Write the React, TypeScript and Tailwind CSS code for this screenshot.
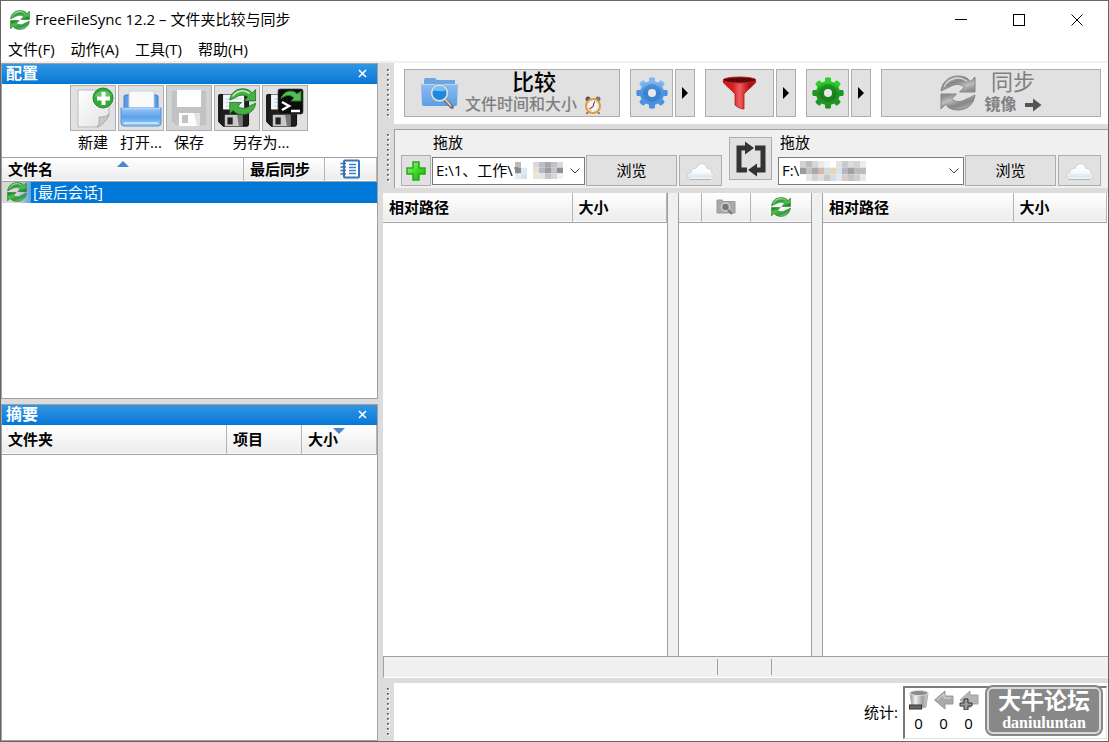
import React from "react";

const SyncIcon = ({ className, gray = false }: { className: string; gray?: boolean }) => {
  const id = gray ? "sync-gray" : "sync-green";
  const arrow =
    "M1 16 C2 7 9 1 18 1 C24 1 28 3 30.5 6.5 L35 2 V17 H19.5 L24.5 12 C20 8.500 15 9 11.500 11 C8 12.500 6 13.500 1 16 Z";
  return (
    <svg viewBox="0 0 36 36" className={className}>
      <defs>
        <linearGradient id={id} x1="0" y1="0" x2="0.7" y2="1">
          <stop offset="0" stopColor={gray ? "#c9c9c9" : "#a5dd9c"} />
          <stop offset="0.45" stopColor={gray ? "#858585" : "#2f9e35"} />
          <stop offset="0.75" stopColor={gray ? "#bdbdbd" : "#55bf50"} />
          <stop offset="1" stopColor={gray ? "#8e8e8e" : "#1f8a2c"} />
        </linearGradient>
      </defs>
      <g fill={`url(#${id})`} stroke={gray ? "#858585" : "#187522"} strokeWidth="1">
        <path d={arrow} />
        <path d={arrow} transform="rotate(180 18 18)" />
      </g>
      <path d="M4 12 C8 4 18 0 27 6" fill="none" stroke="#fff" strokeOpacity="0.6" strokeWidth="1.500" />
    </svg>
  );
};

const GearIcon = ({ className, color }: { className: string; color: "blue" | "green" }) => {
  const fill = color === "blue" ? "#4a92e0" : "#1f9423";
  const top = color === "blue" ? "#7db8f2" : "#2fce2b";
  const edge = color === "blue" ? "#2f72c4" : "#147018";
  return (
    <svg viewBox="0 0 32 32" className={className}>
      <defs>
        <linearGradient id={`gear-${color}`} x1="0" y1="0" x2="0" y2="1">
          <stop offset="0" stopColor={top} />
          <stop offset="0.5" stopColor={fill} />
          <stop offset="1" stopColor={fill} />
        </linearGradient>
      </defs>
      <g fill={`url(#gear-${color})`}>
        {[0, 45, 90, 135, 180, 225, 270, 315].map((angle) => (
          <path
            key={angle}
            d="M10.500 7 L13 4.500 V1 Q16 -0.500 19 1 V4.500 L21.500 7 Z"
            fill={angle === 0 || angle === 45 || angle === 315 ? top : fill}
            transform={`rotate(${angle} 16 16)`}
          />
        ))}
        <circle cx="16" cy="16" r="12" />
      </g>
      <circle cx="16" cy="16" r="6.500" fill="none" stroke={edge} strokeOpacity="0.5" strokeWidth="5" />
      <circle cx="16" cy="16" r="4" fill="#e8e8e8" />
    </svg>
  );
};

const CloudIcon = () => (
  <svg viewBox="0 0 30 20" className="w-[30px] h-5">
    <defs>
      <linearGradient id="cloud" x1="0" y1="0" x2="0" y2="1">
        <stop offset="0" stopColor="#ffffff" />
        <stop offset="0.55" stopColor="#f7fafc" />
        <stop offset="0.8" stopColor="#dbe8f1" />
        <stop offset="1" stopColor="#fafafa" />
      </linearGradient>
    </defs>
    <path
      d="M6 18.500 C0 18.500 0 12 5 11.500 C5 8 8 7 10 7.500 C12 1 20 1 21 7.500 C24 7 26 9 25.500 11.500 C30 13 29 18.500 24 18.500 Z"
      fill="url(#cloud)"
      stroke="#cfcfcf"
    />
    <path d="M4 18.500 H25" stroke="#b3b3b3" />
  </svg>
);

const Floppy = () => (
  <>
    <path d="M3 5 Q3 4 4 4 H35 Q37 4 37 6 V38 Q37 40 35 40 H8 L3 35 Z" fill="#1d1d1d" stroke="#000" />
    <path d="M8 4 H32 V21 H8 Z" fill="#f3f5f8" />
    <path d="M11 9 H29 M11 13 H29 M11 17 H29" stroke="#b9cfe4" />
    <path d="M10 27 H30 V40 H10 Z" fill="#c9c9c9" />
    <path d="M24 27 H30 V40 H26 Z" fill="#777" />
    <path d="M13 30 H19 V38 H13 Z" fill="#222" />
  </>
);

const NewIcon = () => (
  <svg viewBox="0 0 44 44" className="size-11">
    <defs>
      <linearGradient id="paper" x1="0" y1="0" x2="1" y2="1">
        <stop offset="0" stopColor="#fff" />
        <stop offset="1" stopColor="#e2e2e2" />
      </linearGradient>
    </defs>
    <path d="M7 4 H38 V30 C34 35 31 39 27 41 H7 Z" fill="url(#paper)" stroke="#bbb" />
    <path d="M38 28 C35 31 32 31 28 31 C29 35 28 39 26 41 C32 39 36 34 38 28 Z" fill="#c9c9c9" stroke="#9a9a9a" strokeWidth="0.700" />
    <circle cx="32" cy="12" r="10" fill="#35a83a" stroke="#1f8d2a" />
    <path d="M24 11 C25 4 38 2 40 10 C36 12 30 9 24 11 Z" fill="#77cc73" opacity="0.7" />
    <path d="M30.500 6 H34.500 V10.500 H39 V14.500 H34.500 V19 H30.500 V14.500 H26 V10.500 H30.500 Z" fill="#fff" />
  </svg>
);

const OpenIcon = () => (
  <svg viewBox="0 0 44 44" className="size-11">
    <defs>
      <linearGradient id="tray" x1="0" y1="0" x2="0" y2="1">
        <stop offset="0" stopColor="#96c7f8" />
        <stop offset="0.5" stopColor="#5ba1ec" />
        <stop offset="1" stopColor="#9ccdf7" />
      </linearGradient>
    </defs>
    <path d="M5 11 Q5 9 7 9 H37 Q39 9 39 11 V24 H5 Z" fill="#5a9ce6" stroke="#3a7dcc" />
    <path d="M10 5 H35 V22 H10 Z" fill="#fafafa" stroke="#c7d4e2" />
    <path d="M2 22 H42 V37 Q42 40 39 40 H5 Q2 40 2 37 Z" fill="url(#tray)" stroke="#5792d2" />
    <path d="M3 22.500 H41" stroke="#b4d6fa" strokeWidth="1.500" />
    <path d="M5 37 H39" stroke="#c4e2fb" strokeWidth="2" />
  </svg>
);

const SaveIcon = () => (
  <svg viewBox="0 0 44 44" className="size-11">
    <rect width="44" height="44" fill="#d2d3d3" />
    <path d="M4 4 H40 V40 H9 L4 35 Z" fill="#c2c4c4" stroke="#d8d8d8" />
    <path d="M10 4 H34 V21 H10 Z" fill="#fff" />
    <path d="M12 27 H33 V40 H12 Z" fill="#fdfdfd" />
    <path d="M27 27 H33 V40 H30 Z" fill="#e3e3e3" />
    <path d="M15 29 H21 V37 H15 Z" fill="#c2c4c4" />
  </svg>
);

const SaveAsSyncIcon = () => {
  const arrow =
    "M1 16 C2 7 9 1 18 1 C24 1 28 3 30.5 6.5 L35 2 V17 H19.5 L24.5 12 C20 8.500 15 9 11.500 11 Z";
  return (
    <svg viewBox="0 0 44 44" className="size-11">
      <g transform="translate(1 5) scale(0.88)">
        <Floppy />
      </g>
      <g transform="translate(14 2) scale(0.76)" fill="#46b045" stroke="#14691d">
        <path d={arrow} />
        <path d={arrow} transform="rotate(180 18 18)" />
        <path d="M5 11 C9 4 18 1 27 7" fill="none" stroke="#c6ecbf" strokeWidth="2" />
      </g>
    </svg>
  );
};

const SaveAsBatchIcon = () => (
  <svg viewBox="0 0 44 44" className="size-11">
    <g transform="translate(1 5) scale(0.88)">
      <Floppy />
    </g>
    <rect x="15" y="3" width="25" height="25" rx="2" fill="#0c0c0c" stroke="#444" strokeWidth="0.700" />
    <path d="M18 13 C20 4 31 3 34 8 L38 5 V15 H28 L31 12 C27 8 22 9 18 13 Z" fill="#58b957" stroke="#1e7d28" />
    <path d="M19 16 L26 20 L19 24" fill="none" stroke="#fff" strokeWidth="2.500" />
    <path d="M28 25 H37" stroke="#fff" strokeWidth="2.500" />
  </svg>
);

const FolderSearchIcon = () => (
  <svg viewBox="0 0 38 34" className="w-[38px] h-[34px]">
    <defs>
      <linearGradient id="folder" x1="0" y1="0" x2="0" y2="1">
        <stop offset="0" stopColor="#8fbcf0" />
        <stop offset="1" stopColor="#5a9de4" />
      </linearGradient>
    </defs>
    <path d="M3 8 V4 Q3 2 5 2 H14 L16 4 H34 V8 Z" fill="#6ca6e2" />
    <path d="M0 8 H37 L36 29 Q36 30 34 30 H3 Q1 30 1 28 Z" fill="url(#folder)" />
    <path d="M1 8.500 H36" stroke="#b5d5f7" />
    <path d="M24 24 L31 31" stroke="#777" strokeWidth="4" strokeLinecap="round" />
    <path d="M24 23 L30 30" stroke="#d5d5d5" strokeWidth="1.500" />
    <circle cx="18.500" cy="17" r="8" fill="#1f88dc" stroke="#d9e3ec" strokeWidth="2" />
    <circle cx="18.500" cy="17" r="9" fill="none" stroke="#8a9aa8" strokeWidth="0.600" />
    <path d="M12 15 C13 9 22 8 25 14 C20 17 16 14 12 15 Z" fill="#6fc3f7" />
  </svg>
);

const ClockIcon = () => (
  <svg viewBox="0 0 20 20" className="size-5">
    <circle cx="5" cy="4" r="2.500" fill="#555" />
    <circle cx="15" cy="4" r="2.500" fill="#777" />
    <path d="M5 17 L3.500 19 M15 17 L16.500 19" stroke="#777" strokeWidth="2" />
    <circle cx="10" cy="11" r="7" fill="#f5f8fb" stroke="#e39a3c" strokeWidth="2" />
    <circle cx="10" cy="11" r="5" fill="none" stroke="#a8b9c8" strokeWidth="1" strokeDasharray="1 2" />
    <path d="M11.500 6.500 L10 11.500" stroke="#333" />
    <path d="M10 11.500 L6.500 14" stroke="#e03030" strokeWidth="1.500" />
  </svg>
);

const FunnelIcon = () => (
  <svg viewBox="0 0 36 34" className="w-9 h-[34px]">
    <defs>
      <linearGradient id="funnel" x1="0" y1="0" x2="1" y2="0">
        <stop offset="0" stopColor="#cf1717" />
        <stop offset="0.3" stopColor="#d92020" />
        <stop offset="0.5" stopColor="#ee5e5e" />
        <stop offset="0.8" stopColor="#b50d0d" />
      </linearGradient>
    </defs>
    <path d="M1 5 C1 8 9 13 13 18 V29 C15 31 19 33 22 33 V18 C26 13 34 8 34 5 Z" fill="url(#funnel)" stroke="#b31515" strokeWidth="0.800" />
    <ellipse cx="17.500" cy="4" rx="16.500" ry="3" fill="#5d0909" stroke="#c92020" strokeWidth="1" />
  </svg>
);

const SwapIcon = () => (
  <svg viewBox="0 0 32 36" className="w-8 h-9">
    <g fill="none" stroke="#333" strokeWidth="5">
      <path d="M12 29 H4 V7 H11" />
      <path d="M20 7 H28 V29 H21" />
    </g>
    <path d="M10 0.500 L19 7 L10 13.500 Z" fill="#333" />
    <path d="M22 22.500 L13 29 L22 35.500 Z" fill="#333" />
  </svg>
);

const PlusIcon = () => (
  <svg viewBox="0 0 20 20" className="size-5">
    <defs>
      <linearGradient id="plus" x1="0" y1="0" x2="1" y2="1">
        <stop offset="0" stopColor="#b4f59a" />
        <stop offset="0.5" stopColor="#3fdc25" />
        <stop offset="1" stopColor="#13b500" />
      </linearGradient>
    </defs>
    <path d="M7 1 H13 V7 H19 V13 H13 V19 H7 V13 H1 V7 H7 Z" fill="url(#plus)" stroke="#2ba51b" strokeWidth="1.500" />
  </svg>
);

const LogIcon = () => (
  <svg viewBox="0 0 20 20" className="size-5">
    <rect x="4" y="1.500" width="15" height="17" rx="1" fill="#fff" stroke="#3474c0" strokeWidth="2" />
    <path d="M9 5.500 H16 M9 8.500 H16 M9 11.500 H16 M9 14.500 H16" stroke="#3f7fc9" strokeWidth="1.500" />
    <path d="M0.500 4.500 H6 M0.500 8 H6 M0.500 11.500 H6 M0.500 15 H6" stroke="#3f6fa5" strokeWidth="1.500" />
  </svg>
);

const CameraIcon = () => (
  <svg viewBox="0 0 20 18" className="w-5 h-[18px]">
    <path d="M1 2 H6 L7 3.500 H19 V15 H1 Z" fill="#a9a9a9" stroke="#999" />
    <circle cx="9.500" cy="9" r="4" fill="#777" stroke="#d0d0d0" strokeWidth="1.500" />
    <path d="M12 12 L16 16" stroke="#777" strokeWidth="2" />
  </svg>
);

const Gripper = ({ id }: { id: string }) => (
  <div className="w-[11px] shrink-0 bg-[#dcdcdc] flex items-center pl-1">
    <svg width="3" height="49">
      <defs>
        <pattern id={id} width="3" height="5" patternUnits="userSpaceOnUse">
          <rect width="2" height="2" fill="#8c8c8c" />
          <rect width="1" height="1" fill="#4a4a4a" />
          <path d="M2 1 H3 V3 H1 V2 H2 Z" fill="#fff" />
        </pattern>
      </defs>
      <rect width="3" height="49" fill={`url(#${id})`} />
    </svg>
  </div>
);

const Button = ({
  className,
  label,
  disabled,
  children,
}: {
  className: string;
  label?: string;
  disabled?: boolean;
  children: React.ReactNode;
}) => (
  <button
    type="button"
    aria-label={label}
    disabled={disabled}
    className={`flex items-center justify-center shrink-0 bg-[#e1e1e1] border border-[#adadad] ${className}`}
  >
    {children}
  </button>
);

const MenuArrow = ({ label }: { label: string }) => (
  <Button className="w-5 h-12" label={label}>
    <svg viewBox="0 0 6 12" className="w-[6px] h-3">
      <path d="M0 0 L6 6 L0 12 Z" fill="#000" />
    </svg>
  </Button>
);

const Caption = ({ title }: { title: string }) => (
  <div className="h-5 shrink-0 flex items-start justify-between pl-1 pr-[9px] bg-linear-to-b from-[#3096e4] to-[#0078d7] text-white">
    <h2 className="text-[16px] leading-[18px] font-bold">{title}</h2>
    <button type="button" aria-label={`关闭${title}`} className="w-3 h-[19px] flex items-center justify-center">
      <svg viewBox="0 0 9 9" className="w-[9px] h-[9px]">
        <path d="M1 1 L8 8 M8 1 L1 8" stroke="#fff" strokeWidth="1.600" />
      </svg>
    </button>
  </div>
);

const SortArrow = ({ down = false, className }: { down?: boolean; className: string }) => (
  <svg viewBox="0 0 12 6" className={`absolute w-3 h-[6px] ${className}`}>
    <path d={down ? "M0 0 H12 L6 6 Z" : "M0 6 L6 0 L12 6 Z"} fill="#4a86cc" />
  </svg>
);

const Mosaic = ({ rows, className }: { rows: string[][]; className: string }) => (
  <svg
    viewBox={`0 0 ${rows[0].length * 6} ${rows.length * 6}`}
    preserveAspectRatio="none"
    className={`absolute pointer-events-none ${className}`}
  >
    {rows.map((row, y) =>
      row.map((color, x) => <rect key={`${x}-${y}`} x={x * 6} y={y * 6} width="6" height="6" fill={color} />)
    )}
  </svg>
);

const leftMosaic = [
  ["#b9b9b9", "#ffffff", "#ffffff", "#d8d8d8", "#bdbdc2", "#a8a8a8", "#c3c3c3", "#d9d9dd"],
  ["#8c8c8c", "#dde9f3", "#ffffff", "#e6dfd6", "#b3b9c2", "#9d9d9d", "#bfc3cc", "#909090"],
  ["#ececec", "#cfe4f5", "#ffffff", "#f0e2d0", "#e3e3e3", "#c6c6c6", "#d5d5d5", "#f2f2f2"],
];

const rightMosaic = [
  ["#d2d2d2", "#bdbdbd", "#d6d6d6", "#e9e9e9", "#f3f3f3", "#ffffff", "#e2e2e2", "#cacaca", "#dcdcdc", "#d3d3d3", "#ececec"],
  ["#9b9b9b", "#c4c0c0", "#a9a9b0", "#d6b9ab", "#cfdbe8", "#ecd5a8", "#d4e4f0", "#b7b7bd", "#a0a0a0", "#bcbcbc", "#bcbcbc"],
  ["#ffffff", "#e6e6e6", "#d3d3d3", "#dfdfdf", "#c9c9c9", "#cedff0", "#e6e6e6", "#d0d0d0", "#c4c4c4", "#d6cdc9", "#e8e8e8"],
];

const FolderSelect = ({ id, value, children }: { id: string; value: string; children: React.ReactNode }) => (
  <div className="relative flex-1 min-w-0 h-7">
    <select
      id={id}
      defaultValue={value}
      className="appearance-none w-full h-full bg-white border border-[#7a7a7a] pl-[3px] pb-[2px] text-[15px] leading-5"
    >
      <option>{value}</option>
    </select>
    {children}
    <svg viewBox="0 0 10 6" className="absolute right-[5px] top-[11px] w-[10px] h-[6px] pointer-events-none">
      <path d="M0.500 0.500 L5 5 L9.500 0.500" fill="none" stroke="#444" />
    </svg>
  </div>
);

const th = "relative text-left font-bold whitespace-nowrap border-r border-[#b4b4b4] pl-[6px]";
const headRow = "bg-linear-to-b from-white to-[#ececec] border-b border-[#a0a0a0]";

const Stat = ({ children }: { children: React.ReactNode }) => (
  <div className="w-[25px] flex flex-col items-center">
    <div className="h-[25px] flex items-center">{children}</div>
    <span className="leading-5">0</span>
  </div>
);

const App = () => {
  return (
    <div className="h-screen flex flex-col overflow-hidden border border-[#666] bg-white text-black text-[15px] leading-5 font-['Open_Sans','Noto_Sans_CJK_SC',sans-serif]">
      <header className="h-[38px] shrink-0 flex items-center pl-[9px] pr-[2px]">
        <SyncIcon className="size-5" />
        <h1 className="flex-1 pl-[5px] pb-[2px]">FreeFileSync 12.2 – 文件夹比较与同步</h1>
        <button type="button" aria-label="最小化" className="w-[58px] h-full flex items-center justify-center">
          <svg viewBox="0 0 12 12" className="size-3">
            <path d="M0 5.500 H12" stroke="#000" />
          </svg>
        </button>
        <button type="button" aria-label="最大化" className="w-[58px] h-full flex items-center justify-center">
          <svg viewBox="0 0 12 12" className="size-3">
            <rect x="0.500" y="0.500" width="11" height="11" fill="none" stroke="#000" />
          </svg>
        </button>
        <button type="button" aria-label="关闭" className="w-[58px] h-full flex items-center justify-center">
          <svg viewBox="0 0 12 12" className="size-3">
            <path d="M0.500 0.500 L11.500 11.500 M11.500 0.500 L0.500 11.500" stroke="#000" />
          </svg>
        </button>
      </header>
      <nav className="h-6 shrink-0 flex items-start gap-[2px] border-b-2 border-[#f0f0f0]">
        <button type="button" className="px-[7px]">文件(F)</button>
        <button type="button" className="px-[7px]">动作(A)</button>
        <button type="button" className="px-[7px]">工具(T)</button>
        <button type="button" className="px-[7px]">帮助(H)</button>
      </nav>

      <main className="flex-1 min-h-0 flex bg-[#dcdcdc]">
        <aside className="w-[377px] shrink-0 flex flex-col gap-[5px]">
          <section className="h-[336px] shrink-0 flex flex-col bg-white border border-[#a0a0a0]">
            <Caption title="配置" />
            <div className="h-[74px] shrink-0 flex justify-center gap-[2px] pt-px pr-px border-b border-[#a0a0a0]">
              <div className="w-[46px] flex flex-col items-center gap-px whitespace-nowrap">
                <Button className="size-[46px]" label="新建"><NewIcon /></Button>
                <span>新建</span>
              </div>
              <div className="w-[46px] flex flex-col items-center gap-px whitespace-nowrap">
                <Button className="size-[46px]" label="打开"><OpenIcon /></Button>
                <span>打开...</span>
              </div>
              <div className="w-[46px] flex flex-col items-center gap-px whitespace-nowrap">
                <Button className="size-[46px]" label="保存" disabled><SaveIcon /></Button>
                <span>保存</span>
              </div>
              <div className="flex flex-col items-center gap-px whitespace-nowrap">
                <div className="flex gap-[2px]">
                  <Button className="size-[46px]" label="另存为"><SaveAsSyncIcon /></Button>
                  <Button className="size-[46px]" label="另存为批处理"><SaveAsBatchIcon /></Button>
                </div>
                <span>另存为...</span>
              </div>
            </div>
            <table className="w-full table-fixed">
              <thead>
                <tr className={`h-[23px] ${headRow}`}>
                  <th className={th}>
                    文件名
                    <SortArrow className="left-[115px] top-[3px]" />
                  </th>
                  <th className={`${th} w-[81px]`}>最后同步</th>
                  <th className={`${th} w-[52px]`} aria-label="日志">
                    <div className="flex justify-center pr-2"><LogIcon /></div>
                  </th>
                </tr>
              </thead>
              <tbody>
                <tr className="h-[21px] bg-[#0078d7] text-white">
                  <td colSpan={3}>
                    <div className="flex items-center h-[21px]">
                      <div className="w-[29px] h-full flex items-center justify-center bg-linear-to-r from-[#d8d8d8] via-[#d8d8d8] to-[#5aa2dc]">
                        <SyncIcon className="size-5" />
                      </div>
                      <span className="pl-[2px]">[最后会话]</span>
                    </div>
                  </td>
                </tr>
              </tbody>
            </table>
          </section>

          <section className="flex-1 min-h-0 flex flex-col bg-white border border-[#a0a0a0]">
            <Caption title="摘要" />
            <table className="w-full table-fixed">
              <thead>
                <tr className={`h-[29px] ${headRow}`}>
                  <th className={th}>文件夹</th>
                  <th className={`${th} w-[75px]`}>项目</th>
                  <th className={`${th} w-[75px]`}>
                    大小
                    <SortArrow down className="left-[31px] top-[3px]" />
                  </th>
                </tr>
              </thead>
            </table>
          </section>
        </aside>

        <div className="flex-1 min-w-0 flex flex-col gap-[5px] pl-[5px]">
          <div className="h-[61px] shrink-0 flex">
            <Gripper id="grip-main" />
            <div className="flex-1 min-w-0 flex items-start gap-[10px] bg-white pt-[6px] pl-[10px] pr-[7px]">
              <Button className="w-[216px] h-12 gap-[6px]">
                <FolderSearchIcon />
                <span className="flex flex-col items-center font-['Liberation_Serif','Noto_Sans_CJK_SC',serif]">
                  <span className="text-[22px] leading-6 font-medium">比较</span>
                  <span className="flex items-center gap-[6px] text-[16px] leading-5 font-medium text-[#808080]">
                    文件时间和大小
                    <ClockIcon />
                  </span>
                </span>
              </Button>
              <div className="flex gap-[2px]">
                <Button className="w-[43px] h-12" label="比较设置"><GearIcon className="size-8" color="blue" /></Button>
                <MenuArrow label="比较选项" />
              </div>
              <div className="flex gap-[2px]">
                <Button className="w-[69px] h-12" label="过滤器"><FunnelIcon /></Button>
                <MenuArrow label="过滤选项" />
              </div>
              <div className="flex gap-[2px]">
                <Button className="w-[43px] h-12" label="同步设置"><GearIcon className="size-8" color="green" /></Button>
                <MenuArrow label="同步选项" />
              </div>
              <Button className="flex-1 h-12 gap-2" disabled>
                <SyncIcon gray className="size-9" />
                <span className="flex flex-col items-center text-[#808080] font-['Liberation_Serif','Noto_Sans_CJK_SC',serif]">
                  <span className="text-[22px] leading-6">同步</span>
                  <span className="flex items-center gap-[7px] text-[16px] leading-5 font-bold">
                    镜像
                    <svg viewBox="0 0 18 14" className="w-[18px] h-[14px]">
                      <path d="M1 5 H9 V0.500 L17.500 7 L9 13.500 V9 H1 Z" fill="#555" />
                    </svg>
                  </span>
                </span>
              </Button>
            </div>
          </div>

          <div className="h-[59px] shrink-0 flex">
            <Gripper id="grip-folders" />
            <div className="flex-1 min-w-0 grid grid-cols-[322fr_43px_323fr] gap-x-[6px] bg-[#f0f0f0] border-l border-t border-[#a0a0a0] pt-[2px] pl-[6px] pr-[7px]">
              <div className="min-w-0 pr-px">
                <label htmlFor="left-folder" className="block pl-8">拖放</label>
                <div className="flex items-center gap-px pt-[3px]">
                  <Button className="w-[30px] h-[31px]" label="添加文件夹对"><PlusIcon /></Button>
                  <FolderSelect id="left-folder" value="E:\1、工作\1">
                    <Mosaic rows={leftMosaic} className="left-[83px] top-[5px] w-12 h-[17px]" />
                  </FolderSelect>
                  <div className="flex gap-[2px]">
                    <Button className="w-[91px] h-[31px] pb-[2px]">浏览</Button>
                    <Button className="w-[43px] h-[31px]" label="云存储"><CloudIcon /></Button>
                  </div>
                </div>
              </div>
              <div className="pt-[5px]">
                <Button className="size-[43px]" label="交换两侧"><SwapIcon /></Button>
              </div>
              <div className="min-w-0">
                <label htmlFor="right-folder" className="block pl-[2px]">拖放</label>
                <div className="flex items-center gap-px pt-[3px]">
                  <FolderSelect id="right-folder" value="F:\">
                    <Mosaic rows={rightMosaic} className="left-[22px] top-[4px] w-[66px] h-5" />
                  </FolderSelect>
                  <div className="flex gap-[2px]">
                    <Button className="w-[91px] h-[31px] pb-[2px]">浏览</Button>
                    <Button className="w-[43px] h-[31px]" label="云存储"><CloudIcon /></Button>
                  </div>
                </div>
              </div>
            </div>
          </div>

          <div className="flex-1 min-h-0 flex flex-col bg-white">
            <div className="flex-1 min-h-0 grid grid-cols-[1fr_12px_132px_12px_1fr] pr-px">
              <div>
                <table className="w-full table-fixed">
                  <thead>
                    <tr className={`h-[29px] ${headRow}`}>
                      <th className={`${th} w-[189px]`}>相对路径</th>
                      <th className={th}>大小</th>
                    </tr>
                  </thead>
                </table>
              </div>
              <div className="bg-[#f0f0f0] border-x border-[#a0a0a0]" />
              <div>
                <table className="w-full table-fixed">
                  <thead>
                    <tr className={`h-[29px] ${headRow}`}>
                      <th className="w-[22px] border-r border-[#b4b4b4]" aria-label="选择" />
                      <th className="w-[49px] border-r border-[#b4b4b4]" aria-label="类别">
                        <div className="flex justify-center"><CameraIcon /></div>
                      </th>
                      <th aria-label="操作">
                        <div className="flex justify-center"><SyncIcon className="size-5" /></div>
                      </th>
                    </tr>
                  </thead>
                </table>
              </div>
              <div className="bg-[#f0f0f0] border-x border-[#a0a0a0]" />
              <div>
                <table className="w-full table-fixed">
                  <thead>
                    <tr className={`h-[29px] ${headRow}`}>
                      <th className={`${th} w-[190px]`}>相对路径</th>
                      <th className={th}>大小</th>
                    </tr>
                  </thead>
                </table>
              </div>
            </div>
            <div className="h-[22px] shrink-0 flex items-center bg-[#f0f0f0] border-t border-l border-b border-[#a0a0a0] border-b-white pr-[3px]">
              <div className="flex-1 h-4" />
              <div className="w-[55px] h-4 border-x border-[#a0a0a0]" />
              <div className="flex-1 h-4" />
            </div>
          </div>

          <footer className="h-[58px] shrink-0 flex">
            <Gripper id="grip-stats" />
            <div className="relative flex-1 min-w-0 flex items-center justify-end bg-white pr-px">
              <span className="pr-[5px]">统计:</span>
              <div className="w-[204px] h-[53px] flex pl-[1px] border-l-2 border-t-2 border-r border-b border-[#7a7a7a] border-r-[#e3e3e3] border-b-[#e3e3e3]">
                <Stat>
                  <svg viewBox="0 0 20 20" className="size-5">
                    <defs>
                      <linearGradient id="bin" x1="0" y1="0" x2="1" y2="0">
                        <stop offset="0" stopColor="#8f8f8f" />
                        <stop offset="0.3" stopColor="#f2f2f2" />
                        <stop offset="0.7" stopColor="#9f9f9f" />
                        <stop offset="1" stopColor="#d2d2d2" />
                      </linearGradient>
                    </defs>
                    <path d="M1 3 L3 17 Q10 20 17 17 L19 3 Z" fill="url(#bin)" stroke="#b0b0b0" />
                    <ellipse cx="10" cy="3" rx="9" ry="2.500" fill="#8a8a8a" stroke="#ddd" />
                    <rect x="0.500" y="15" width="12" height="4" fill="#666" stroke="#333" />
                  </svg>
                </Stat>
                <Stat>
                  <svg viewBox="0 0 20 20" className="size-5">
                    <path d="M0.500 10 L11 1 V6 H19 V14 H11 V19 Z" fill="#a9a9a9" stroke="#989898" />
                    <path d="M3 10 L10 4 V8 H17" fill="none" stroke="#ddd" />
                  </svg>
                </Stat>
                <Stat>
                  <svg viewBox="0 0 20 20" className="size-5">
                    <path d="M1 10 L11 1 V5 H19 V14 H11 V18 Z" fill="#b4b4b4" stroke="#a0a0a0" />
                    <path d="M5 9 H9 V13 H13 V16 H9 V20 H5 V16 H1 V13 H5 Z" fill="#999" stroke="#333" />
                  </svg>
                </Stat>
              </div>
              {/* forum badge */}
              <div className="absolute right-[5px] top-[2px] w-[118px] h-[51px] rounded-lg bg-[#888] border-2 border-[#888] text-white">
                <div className="h-full rounded-md border-2 border-[#d9d9d9] flex flex-col items-center justify-center font-bold whitespace-nowrap font-['Liberation_Serif','Noto_Sans_CJK_SC',serif]">
                  <span className="text-[23px] leading-6">大牛论坛</span>
                  <span className="text-[16px] leading-[18px]">daniuluntan</span>
                </div>
              </div>
            </div>
          </footer>
        </div>
      </main>
    </div>
  );
};

export default App;
